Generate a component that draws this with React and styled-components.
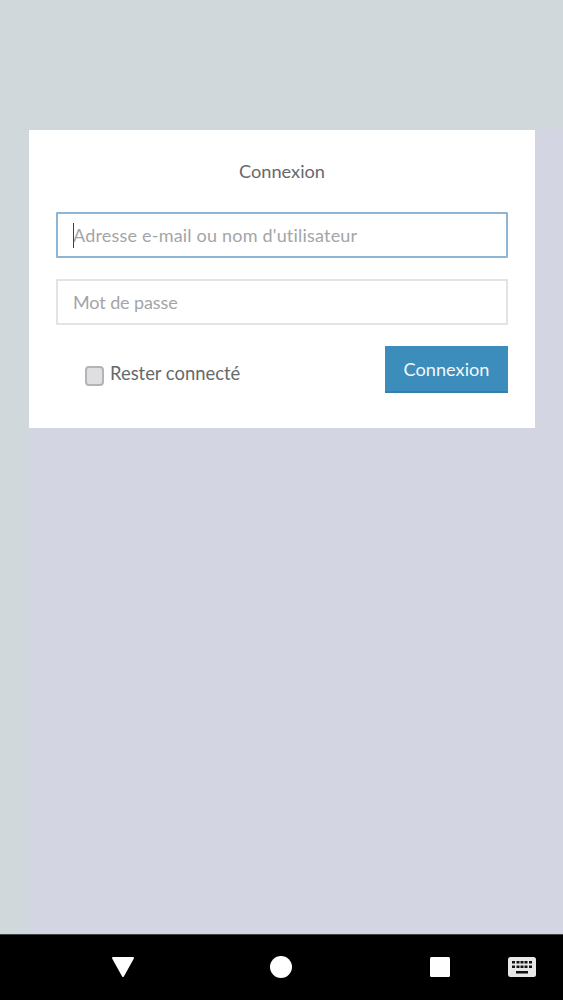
import React from 'react'
import styled, { createGlobalStyle } from 'styled-components'

const GlobalStyle = createGlobalStyle`
  html, body {
    margin: 0;
    padding: 0;
    height: 100%;
    background: #d0d8dc;
    font-family: "Lato", "Open Sans", sans-serif;
    font-variant-ligatures: none;
  }
  * { box-sizing: border-box; }
`

const Page = styled.div`
  width: 563px;
  height: 1000px;
  display: flex;
  flex-direction: column;
  overflow: hidden;
  background: #d0d8dc;
`

const Content = styled.div`
  flex: 1;
  padding: 130px 0 0 29px;
  display: flex;
`

const Backdrop = styled.div`
  flex: 1;
  background: #d3d6e2;
`

const Card = styled.form`
  width: 506px;
  height: 298px;
  background: #fff;
  padding: 30px 27px 0 27px;
  display: flex;
  flex-direction: column;
`

const Title = styled.h1`
  margin: 0 0 29px;
  height: 23px;
  font-size: 18.2px;
  line-height: 23px;
  font-weight: 400;
  color: #66696c;
  text-align: center;
`

const Field = styled.div`
  position: relative;
  height: 46px;
  margin-bottom: 21px;
`

const Input = styled.input`
  display: block;
  width: 100%;
  height: 100%;
  padding: 0 15px;
  border: 2px solid ${props => (props.$focused ? '#8db5d6' : '#e2e3e3')};
  border-radius: 1px;
  outline: none;
  background: #fff;
  font-family: inherit;
  font-variant-ligatures: none;
  font-size: 18px;
  letter-spacing: ${props => (props.$focused ? '0.2px' : '-0.1px')};
  color: #66696c;

  &::placeholder {
    color: #a3a5a7;
    opacity: 1;
  }
`

const Caret = styled.span`
  position: absolute;
  left: 17px;
  top: 11px;
  width: 1px;
  height: 25px;
  background: #3a4048;
`

const Actions = styled.div`
  display: flex;
  justify-content: space-between;
  align-items: center;
`

const Remember = styled.label`
  display: flex;
  align-items: center;
  gap: 6px;
  margin: 6px 0 0 29px;
  font-size: 18.4px;
  color: #66696c;
`

const Box = styled.span`
  display: block;
  width: 19px;
  height: 20px;
  margin-top: 7px;
  border: 2px solid #b4b4b6;
  border-radius: 4px;
  background: #dfdfe2;
`

const SubmitButton = styled.button`
  width: 123px;
  height: 47px;
  border: none;
  border-bottom: 2px solid #3580ab;
  background: #3c8dbc;
  color: #f2f8fb;
  font-family: inherit;
  font-variant-ligatures: none;
  font-size: 18.2px;
  padding: 0;
`

const NavBar = styled.nav`
  height: 66px;
  flex-shrink: 0;
  background: #000;
  border-top: 1px solid #3c4446;
  display: grid;
  grid-template-columns: 123px 158px 158px 82px;
  align-items: center;
  padding-bottom: 1px;
`

const NavSlot = styled.div`
  display: flex;
  justify-content: flex-end;
  transform: translateX(${props => props.$shift}px);
`

const App = () => (
  <Page>
    <GlobalStyle />
    <Content>
      <Backdrop>
        <Card onSubmit={e => e.preventDefault()}>
          <Title>Connexion</Title>
          <Field>
            <Input $focused placeholder="Adresse e-mail ou nom d'utilisateur" />
            <Caret />
          </Field>
          <Field>
            <Input type="password" placeholder="Mot de passe" />
          </Field>
          <Actions>
            <Remember>
              <Box />
              Rester connecté
            </Remember>
            <SubmitButton>Connexion</SubmitButton>
          </Actions>
        </Card>
      </Backdrop>
    </Content>
    <NavBar>
      <NavSlot $shift={12}>
        <svg width="24" height="22" viewBox="0 0 24 22">
          <path d="M2 2 H22 L12 20 Z" fill="#fff" stroke="#fff" strokeWidth="2" strokeLinejoin="round" />
        </svg>
      </NavSlot>
      <NavSlot $shift={11}>
        <svg width="22" height="22" viewBox="0 0 22 22">
          <circle cx="11" cy="11" r="11" fill="#fff" />
        </svg>
      </NavSlot>
      <NavSlot $shift={11}>
        <svg width="20" height="22" viewBox="0 0 20 22">
          <rect x="0" y="1" width="20" height="20" rx="1.5" fill="#fff" />
        </svg>
      </NavSlot>
      <NavSlot $shift={15}>
        <svg width="28" height="20" viewBox="0 0 28 20">
          <rect x="0" y="0" width="28" height="20" rx="2.5" fill="#e8e8e8" />
          <g fill="#111">
            <rect x="4" y="4" width="3" height="2.5" />
            <rect x="8.5" y="4" width="3" height="2.5" />
            <rect x="12.5" y="4" width="3" height="2.5" />
            <rect x="16.5" y="4" width="3" height="2.5" />
            <rect x="21" y="4" width="3" height="2.5" />
            <rect x="4" y="8.5" width="3" height="2.5" />
            <rect x="8.5" y="8.5" width="3" height="2.5" />
            <rect x="12.5" y="8.5" width="3" height="2.5" />
            <rect x="16.5" y="8.5" width="3" height="2.5" />
            <rect x="21" y="8.5" width="3" height="2.5" />
            <rect x="8" y="14" width="12" height="2.5" />
          </g>
        </svg>
      </NavSlot>
    </NavBar>
  </Page>
)

export default App
